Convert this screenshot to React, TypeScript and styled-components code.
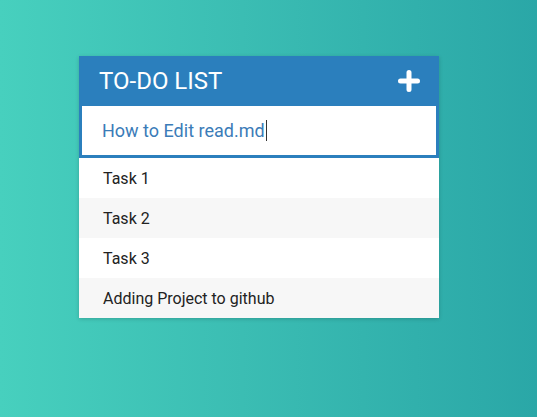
import React from "react";
import styled, { createGlobalStyle } from "styled-components";

const Global = createGlobalStyle`
  html, body { margin: 0; padding: 0; }
  body {
    width: 537px;
    height: 417px;
    overflow: hidden;
    font-family: Roboto, "Liberation Sans", sans-serif;
    background: linear-gradient(90deg, #47d0be 0%, #3bbdb3 45%, #2aa7a7 100%);
  }
`;

const Page = styled.div`
  padding: 56px 0 0 79px;
`;

const Card = styled.div`
  width: 360px;
  background: #fff;
  box-shadow: 0 1px 4px rgba(0, 0, 0, 0.18);
`;

const Header = styled.div`
  height: 50px;
  background: #2b7fbd;
  display: flex;
  align-items: center;
  justify-content: space-between;
  padding: 0 19px 0 20px;
  color: #fff;
`;

const Title = styled.h1`
  margin: 0;
  font-size: 24px;
  font-weight: 400;
`;

const AddButton = styled.button`
  border: none;
  background: none;
  padding: 0;
  width: 22px;
  height: 22px;
  display: flex;
  cursor: pointer;
`;

const InputBox = styled.div`
  height: 49px;
  border: 3px solid #2b7fbd;
  border-top: none;
  display: flex;
  align-items: center;
  padding-left: 20px;
  font-size: 18px;
  color: #3b7cb8;
`;

const Caret = styled.span`
  display: inline-block;
  width: 1px;
  height: 21px;
  background: #333;
  margin-left: 1px;
`;

const List = styled.ul`
  list-style: none;
  margin: 0;
  padding: 0;
`;

const Item = styled.li<{ $alt: boolean }>`
  height: 40px;
  display: flex;
  align-items: center;
  padding-left: 24px;
  font-size: 16px;
  color: #222;
  background: ${(p) => (p.$alt ? "#f7f7f7" : "#fff")};
`;

const tasks = ["Task 1", "Task 2", "Task 3", "Adding Project to github"];

export default function App() {
  return (
    <>
      <Global />
      <Page>
        <Card>
          <Header>
            <Title>TO-DO LIST</Title>
            <AddButton aria-label="add">
              <svg width="22" height="22" viewBox="0 0 22 22">
                <path d="M11 2.5v17M2.5 11h17" stroke="#fff" strokeWidth="5" strokeLinecap="round" />
              </svg>
            </AddButton>
          </Header>
          <InputBox>
            How to Edit read.md
            <Caret />
          </InputBox>
          <List>
            {tasks.map((t, i) => (
              <Item key={t} $alt={i % 2 === 1}>
                {t}
              </Item>
            ))}
          </List>
        </Card>
      </Page>
    </>
  );
}
